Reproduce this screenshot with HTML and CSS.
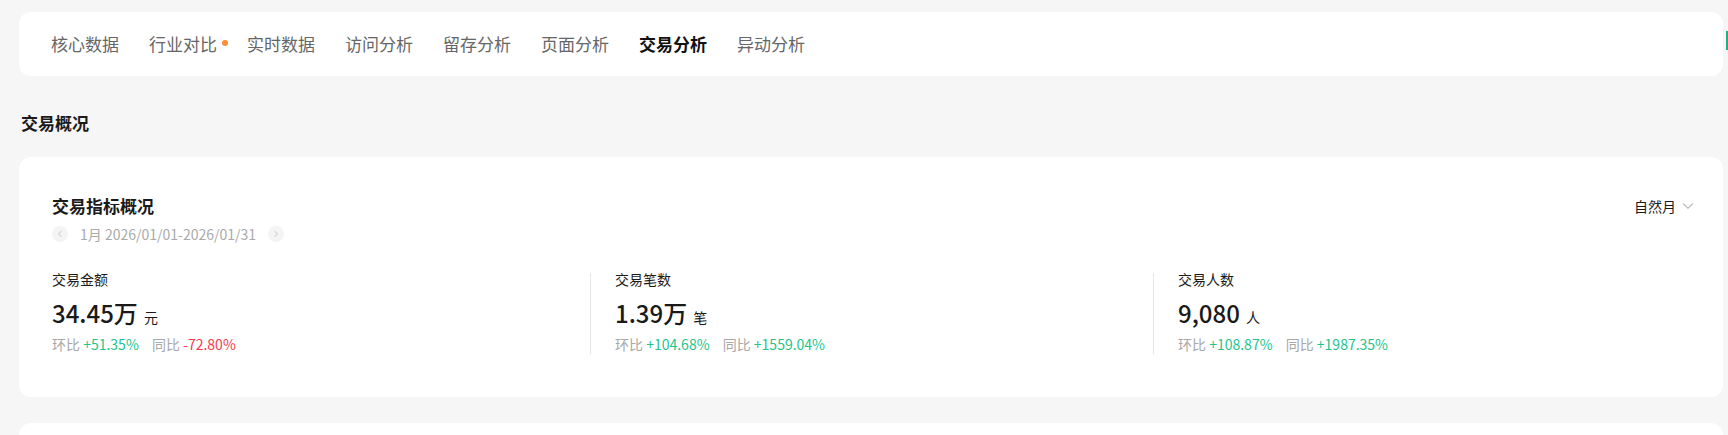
FILE: index.html
```html
<!DOCTYPE html>
<html lang="zh-CN">
<head>
<meta charset="utf-8">
<title>交易分析</title>
<link rel="stylesheet" href="styles.css">
</head>
<body>
<div class="page">
  <nav class="tabs">
    <span class="tab">核心数据</span>
    <span class="tab tab-dot">行业对比</span>
    <span class="tab">实时数据</span>
    <span class="tab">访问分析</span>
    <span class="tab">留存分析</span>
    <span class="tab">页面分析</span>
    <span class="tab active">交易分析</span>
    <span class="tab">异动分析</span>
  </nav>

  <h2 class="section-title">交易概况</h2>

  <section class="card">
    <div class="card-head">
      <div class="head-left">
        <div class="card-title">交易指标概况</div>
        <div class="date-row">
          <span class="circle-btn"><svg width="8" height="8" viewBox="0 0 8 8"><path d="M5.2 1.2 L2.6 4 L5.2 6.8" fill="none" stroke="#c8c8c8" stroke-width="1"/></svg></span>
          <span class="date-text">1月 2026/01/01-2026/01/31</span>
          <span class="circle-btn"><svg width="8" height="8" viewBox="0 0 8 8"><path d="M2.8 1.2 L5.4 4 L2.8 6.8" fill="none" stroke="#c8c8c8" stroke-width="1"/></svg></span>
        </div>
      </div>
      <div class="period-select">
        <span>自然月</span>
        <svg width="12" height="8" viewBox="0 0 12 8"><path d="M1 1.5 L6 6.2 L11 1.5" fill="none" stroke="#bdbdbd" stroke-width="1.2"/></svg>
      </div>
    </div>

    <div class="metrics">
      <div class="metric">
        <div class="metric-label">交易金额</div>
        <div class="metric-value">34.45万<span class="unit">元</span></div>
        <div class="metric-compare">
          <span class="cmp-label">环比</span> <span class="up">+51.35%</span>
          <span class="cmp-label cmp-gap">同比</span> <span class="down">-72.80%</span>
        </div>
      </div>
      <div class="metric">
        <div class="metric-label">交易笔数</div>
        <div class="metric-value">1.39万<span class="unit">笔</span></div>
        <div class="metric-compare">
          <span class="cmp-label">环比</span> <span class="up">+104.68%</span>
          <span class="cmp-label cmp-gap">同比</span> <span class="up">+1559.04%</span>
        </div>
      </div>
      <div class="metric">
        <div class="metric-label">交易人数</div>
        <div class="metric-value">9,080<span class="unit">人</span></div>
        <div class="metric-compare">
          <span class="cmp-label">环比</span> <span class="up">+108.87%</span>
          <span class="cmp-label cmp-gap">同比</span> <span class="up">+1987.35%</span>
        </div>
      </div>
    </div>
  </section>

  <section class="card card-next"></section>
</div>
<div class="edge-marker"></div>
</body>
</html>
```

FILE: styles.css
```css
html, body {
  margin: 0;
  padding: 0;
  height: 100%;
  overflow: hidden;
}

body {
  background: #f6f6f6;
  font-family: "Noto Sans CJK SC", "Noto Sans", sans-serif;
  color: #1a1a1a;
}

.page {
  padding: 12px 5px 0 19px;
}

.tabs {
  display: flex;
  align-items: center;
  gap: 30px;
  height: 64px;
  padding: 0 32px;
  background: #fff;
  border-radius: 12px;
}

.tab {
  position: relative;
  font-size: 17px;
  line-height: 24px;
  color: #666;
  white-space: nowrap;
}

.tab.active {
  color: #111;
  font-weight: 700;
}

.tab-dot::after {
  content: "";
  position: absolute;
  left: calc(100% + 5px);
  top: 8px;
  width: 6px;
  height: 6px;
  border-radius: 50%;
  background: #ff8d33;
}

.section-title {
  margin: 35px 0 22px 2px;
  font-size: 17px;
  line-height: 24px;
  font-weight: 700;
  color: #1a1a1a;
}

.card {
  background: #fff;
  border-radius: 12px;
  padding: 37px 29px 43px 33px;
}

.card-head {
  display: flex;
  justify-content: space-between;
  align-items: flex-start;
}

.card-title {
  font-size: 17px;
  line-height: 24px;
  font-weight: 700;
  color: #1a1a1a;
}

.date-row {
  display: flex;
  align-items: center;
  gap: 12px;
  height: 20px;
  margin-top: 6px;
}

.circle-btn {
  display: flex;
  align-items: center;
  justify-content: center;
  width: 16px;
  height: 16px;
  border-radius: 50%;
  background: #f4f4f4;
}

.date-text {
  font-size: 14px;
  line-height: 20px;
  color: #aaa;
}

.period-select {
  display: flex;
  align-items: center;
  gap: 6px;
  height: 24px;
  padding-left: 3px;
  font-size: 14px;
  color: #1a1a1a;
}

.metrics {
  display: grid;
  grid-template-columns: 538px 563px 1fr;
  margin-top: 25px;
}

.metric {
  position: relative;
}

.metric + .metric {
  padding-left: 25px;
}

.metric + .metric::before {
  content: "";
  position: absolute;
  left: 0;
  top: 4px;
  bottom: 0;
  width: 1px;
  background: #e6e6e6;
}

.metric-label {
  font-size: 14px;
  line-height: 20px;
  color: #1a1a1a;
}

.metric-value {
  margin-top: 8px;
  font-size: 24px;
  line-height: 32px;
  font-weight: 500;
  color: #1a1a1a;
}

.unit {
  margin-left: 6px;
  font-size: 14px;
  font-weight: 400;
}

.metric-compare {
  margin-top: 1px;
  font-size: 14px;
  line-height: 20px;
  white-space: nowrap;
}

.cmp-label {
  color: #a8a8a8;
}

.cmp-gap {
  margin-left: 10px;
}

.up {
  color: #1fc58b;
}

.down {
  color: #f7394d;
}

.card-next {
  margin-top: 26px;
  height: 60px;
  padding: 0;
}

.edge-marker {
  position: absolute;
  right: 0;
  top: 31px;
  width: 2px;
  height: 19px;
  background: #22b07d;
}
```
